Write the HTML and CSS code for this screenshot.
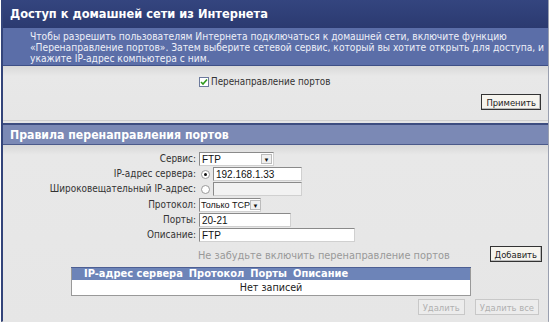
FILE: index.html
```html
<!DOCTYPE html>
<html lang="ru">
<head>
  <meta charset="utf-8">
  <title>Доступ к домашней сети из Интернета</title>
  <link rel="stylesheet" href="styles.css">
</head>
<body>
  <div class="page">
    <h1 class="title">Доступ к домашней сети из Интернета</h1>
    <p class="intro">
      Чтобы разрешить пользователям Интернета подключаться к домашней сети, включите функцию<br>
      «Перенаправление портов». Затем выберите сетевой сервис, который вы хотите открыть для доступа, и<br>
      укажите IP-адрес компьютера с ним.
    </p>

    <div class="panel top-panel">
      <label class="check">
        <span class="cbox">
          <svg width="8" height="8" viewBox="0 0 8 8"><path d="M1 4 L3 6 L7 1.5" fill="none" stroke="#2f9a1c" stroke-width="1.6"/></svg>
        </span>
        Перенаправление портов
      </label>
      <div class="actions">
        <button class="btn">Применить</button>
      </div>
    </div>

    <h2 class="section-title">Правила перенаправления портов</h2>

    <div class="panel rules">
      <div class="form">
        <span class="lbl">Сервис:</span>
        <span class="ctl"><span class="select wide">FTP<span class="arrow">▼</span></span></span>

        <span class="lbl">IP-адрес сервера:</span>
        <span class="ctl"><span class="radio on"></span><input class="entrada ip" value="192.168.1.33"></span>

        <span class="lbl">Широковещательный IP-адрес:</span>
        <span class="ctl"><span class="radio"></span><input class="entrada ip off" disabled></span>

        <span class="lbl spaced">Протокол:</span>
        <span class="ctl spaced"><span class="select narrow">Только TCP<span class="arrow">▼</span></span></span>

        <span class="lbl">Порты:</span>
        <span class="ctl"><input class="entrada ports" value="20-21"></span>

        <span class="lbl">Описание:</span>
        <span class="ctl"><input class="entrada desc" value="FTP"></span>
      </div>

      <div class="note-row">
        <span class="note">Не забудьте включить перенаправление портов</span>
        <button class="btn">Добавить</button>
      </div>

      <table class="rules-table">
        <tr>
          <th>IP-адрес сервера</th>
          <th>Протокол</th>
          <th>Порты</th>
          <th class="last">Описание</th>
        </tr>
        <tr>
          <td colspan="4">Нет записей</td>
        </tr>
      </table>

      <div class="actions bottom">
        <button class="btn" disabled>Удалить</button>
        <button class="btn" disabled>Удалить все</button>
      </div>
    </div>
  </div>
</body>
</html>
```

FILE: styles.css
```css
* {
  margin: 0;
  padding: 0;
  box-sizing: border-box;
}

body {
  background: #ffffff;
  font-family: "DejaVu Sans Condensed", "DejaVu Sans", sans-serif;
  font-size: 10px;
  color: #333;
}

.page {
  width: 548px;
  height: 322px;
  margin-left: 1px;
  border-left: 2px solid #33447a;
  border-right: 1px solid #9aa0b0;
  border-bottom: 1px solid #b8b8b8;
  background: #e5e5e5;
}

.title {
  height: 28px;
  padding: 6px 0 0 7px;
  background: linear-gradient(#34457f, #2b3a70);
  color: #fff;
  font-size: 12.7px;
  font-weight: bold;
  line-height: 16px;
}

.intro {
  height: 38px;
  padding: 3px 0 0 27px;
  background: #5b6ea8;
  color: #eef0f8;
  font-size: 10.2px;
  line-height: 11px;
  white-space: nowrap;
  border-bottom: 1px solid #3e4f86;
}

.panel {
  background: linear-gradient(#d8d8d8, #e8e8e8 10px, #e6e6e6);
}

.top-panel {
  height: 55px;
  padding-top: 10px;
  border-bottom: 1px solid #cfcfcf;
}

.check {
  display: flex;
  align-items: center;
  margin-left: 196px;
  font-size: 9.8px;
  color: #333;
}

.cbox {
  width: 10px;
  height: 10px;
  margin-right: 2px;
  border: 1px solid #6c7a9c;
  background: #fff;
  display: flex;
  align-items: center;
  justify-content: center;
}

.actions {
  display: flex;
  justify-content: flex-end;
  gap: 10px;
  padding-right: 7px;
}

.top-panel .actions {
  margin-top: 7px;
}

.btn {
  height: 16px;
  padding: 0 4px;
  font-family: "DejaVu Sans Condensed", "DejaVu Sans", sans-serif;
  font-size: 9.4px;
  color: #222;
  background: #f6f4ee;
  border: 1px solid #333;
  box-shadow: inset -1px -1px 0 #bbb;
}

.btn:disabled {
  color: #b0b0b0;
  border-color: #c8c8c8;
  background: #ececec;
  box-shadow: none;
}

.section-title {
  height: 22px;
  margin-top: 2px;
  padding: 3px 0 0 7px;
  background: #7b89b5;
  border-top: 2px solid #3d4d80;
  border-bottom: 1px solid #4b5a8a;
  color: #fff;
  font-size: 12.2px;
  font-weight: bold;
  line-height: 15px;
}

.rules {
  height: 179px;
  padding-top: 7px;
}

.form {
  display: grid;
  grid-template-columns: 193px auto;
  column-gap: 3px;
  row-gap: 1px;
  align-items: center;
}

.lbl {
  text-align: right;
  font-size: 9.9px;
  color: #333;
  line-height: 14px;
}

.spaced {
  margin-top: 1px;
}

.ctl {
  display: flex;
  align-items: center;
  height: 14px;
}

.entrada,
.select {
  height: 14px;
  border: 1px solid #8a8a8a;
  border-right-color: #d0d0d0;
  border-bottom-color: #d0d0d0;
  background: #fff;
  font-family: "Liberation Sans", Arial, sans-serif;
  font-size: 10px;
  color: #111;
  padding: 0 2px;
  outline: none;
}

.entrada.off {
  background: #f2f2f2;
}

.ip {
  width: 89px;
}

.ports {
  width: 92px;
}

.desc {
  width: 156px;
}

.select {
  display: flex;
  align-items: center;
  justify-content: space-between;
  padding-right: 1px;
  white-space: nowrap;
}

.select.wide {
  width: 75px;
}

.select.narrow {
  width: 62px;
  font-size: 9px;
  padding-left: 1px;
}

.arrow {
  flex: none;
  width: 11px;
  height: 10px;
  font-size: 6px;
  line-height: 10px;
  text-align: center;
  color: #111;
  background: #f0f0f0;
  border: 1px solid #bbb;
}

.radio {
  width: 9px;
  height: 9px;
  margin: 0 3px 0 2px;
  border-radius: 50%;
  border: 1px solid #999;
  background: #fff;
  position: relative;
}

.radio.on::after {
  content: "";
  position: absolute;
  left: 2px;
  top: 2px;
  width: 3px;
  height: 3px;
  border-radius: 50%;
  background: #111;
}

.note-row {
  display: flex;
  align-items: center;
  justify-content: space-between;
  margin-top: 4px;
  padding: 0 6px 0 195px;
}

.note {
  font-family: "DejaVu Sans", sans-serif;
  font-size: 9.8px;
  color: #999;
  padding-top: 2px;
}

.rules-table {
  margin: 5px 0 0 68px;
  width: 400px;
  border-collapse: collapse;
  border: 1px solid #999;
}

.rules-table th {
  width: 1%;
  height: 12px;
  background: #6d84b8;
  color: #fff;
  font-family: "DejaVu Sans", sans-serif;
  font-size: 9.9px;
  font-weight: bold;
  line-height: 11px;
  text-align: left;
  padding: 0 0 0 6px;
  white-space: nowrap;
  border-top: 1px solid #4d5f93;
}

.rules-table th:first-child {
  padding-left: 12px;
}

.rules-table th.last {
  width: auto;
}

.rules-table td {
  height: 16px;
  background: #fff;
  text-align: center;
  font-family: "DejaVu Sans", sans-serif;
  font-size: 9.6px;
  color: #222;
}

.actions.bottom {
  margin-top: 3px;
  padding-right: 9px;
}
```
